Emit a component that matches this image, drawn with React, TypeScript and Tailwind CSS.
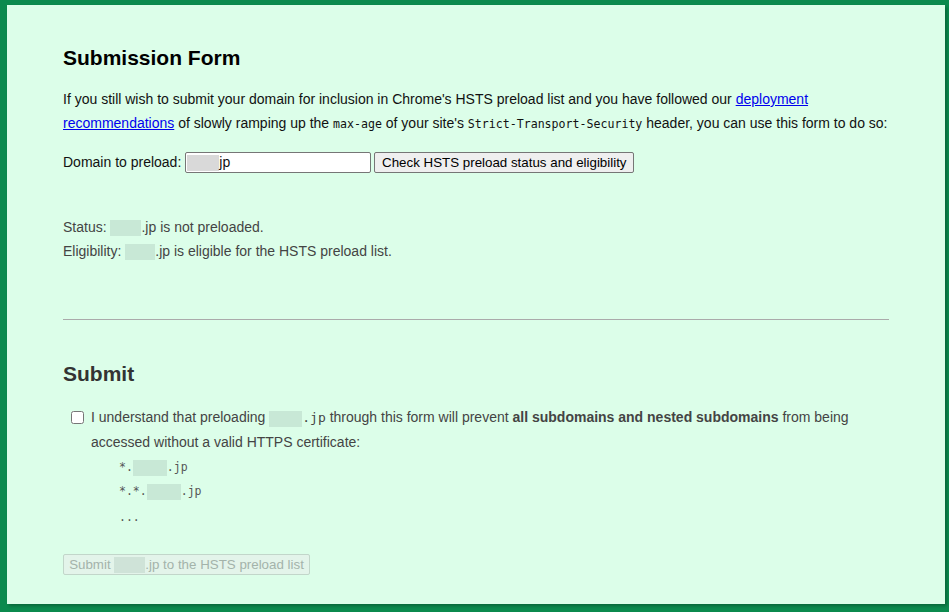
const sans = { fontFamily: '"Liberation Sans", Arial, sans-serif' };

function Blur({ w, tone = "bg" }: { w: number; tone?: "bg" | "input" | "btn" }) {
  const color =
    tone === "input" ? "bg-[#d9d9d9]" : tone === "btn" ? "bg-[#cfe3d8]" : "bg-[#c8e8d6]";
  return (
    <span
      className={`inline-block align-middle h-[16px] ${color}`}
      style={{ width: w }}
    />
  );
}

export default function App() {
  return (
    <div className="min-h-screen w-full bg-[#0b8a4e] pt-[5px] pl-[7px]" style={sans}>
      <div className="w-[938px] h-[599px] bg-[#dcfee9] shadow-[2px_2px_3px_rgba(0,0,0,0.25)] px-[56px] pt-[39px]">
        {/* Submission form */}
        <h2 className="text-[21px] leading-[28px] font-bold text-black">Submission Form</h2>
        <p className="mt-[15px] text-[14px] leading-[24px] text-[#111]">
          If you still wish to submit your domain for inclusion in Chrome's HSTS preload list and you
          have followed our{" "}
          <a href="#" className="text-[#0000ee] underline">
            deployment recommendations
          </a>{" "}
          of slowly ramping up the{" "}
          <code className="font-['DejaVu_Sans_Mono',monospace] text-[11.6px]">max-age</code> of your
          site's{" "}
          <code className="font-['DejaVu_Sans_Mono',monospace] text-[11.6px]">
            Strict-Transport-Security
          </code>{" "}
          header, you can use this form to do so:
        </p>

        <div className="mt-[16px] flex items-center text-[14px] text-[#111]">
          <span>Domain to preload:</span>
          <div className="ml-[4px] w-[186px] h-[21px] bg-white border border-[#767676] rounded-[2px] flex items-center pl-[1px] text-[14px]">
            <Blur w={32} tone="input" />
            <span>jp</span>
          </div>
          <button className="ml-[3px] w-[260px] h-[21px] bg-[#efefef] border border-[#767676] rounded-[2px] text-[13.33px] text-black">
            Check HSTS preload status and eligibility
          </button>
        </div>

        <div className="mt-[42px] text-[14px] leading-[24px] text-[#444]">
          <div>
            Status: <Blur w={31} />.jp is not preloaded.
          </div>
          <div>
            Eligibility: <Blur w={30} />.jp is eligible for the HSTS preload list.
          </div>
        </div>

        <hr className="mt-[56px] border-t border-[#aaaaaa]" />

        {/* Submit */}
        <h2 className="mt-[40px] text-[21px] leading-[28px] font-bold text-[#333]">Submit</h2>
        <div className="mt-[17px] flex items-start text-[14px] leading-[24px] text-[#444]">
          <input
            type="checkbox"
            className="mt-[6px] ml-[8px] mr-[7px] w-[13px] h-[13px] shrink-0"
          />
          <div>
            <p>
              I understand that preloading{" "}
              <span className="font-['DejaVu_Sans_Mono',monospace] text-[13px]">
                <Blur w={33} />
                .jp
              </span>{" "}
              through this form will prevent{" "}
              <strong className="font-bold">all subdomains and nested subdomains</strong> from being
              accessed without a valid HTTPS certificate:
            </p>
            <ul className="mt-[1px] pl-[28px] font-['DejaVu_Sans_Mono',monospace] text-[11.5px] leading-[24px] text-[#555]">
              <li>
                *.<Blur w={34} />
                .jp
              </li>
              <li>
                *.*.<Blur w={34} />
                .jp
              </li>
              <li className="pt-[2px]">...</li>
            </ul>
          </div>
        </div>

        <button
          disabled
          className="mt-[25px] h-[21px] w-[247px] bg-[#e3f4ea] border border-[#c2d6ca] rounded-[2px] text-[13.33px] text-[#a3b3aa] flex items-center justify-center"
        >
          Submit&nbsp;
          <Blur w={31} tone="btn" />
          .jp to the HSTS preload list
        </button>
      </div>
    </div>
  );
}
